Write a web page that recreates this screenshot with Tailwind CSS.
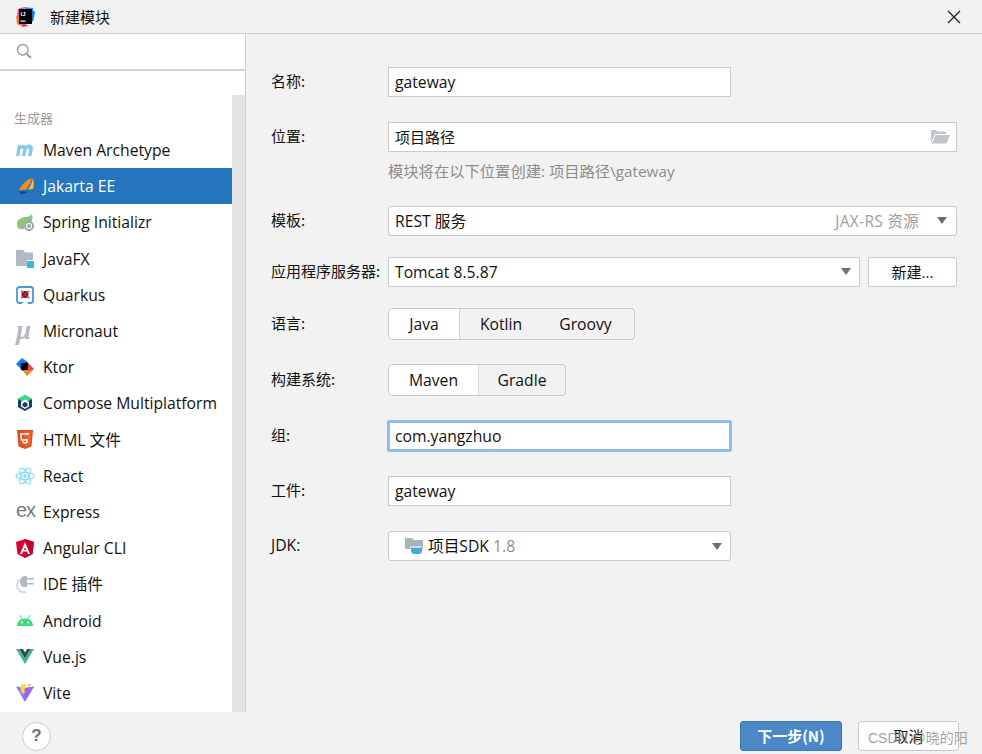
<!DOCTYPE html>
<html lang="zh"><head><meta charset="utf-8">
<script src="https://cdn.jsdelivr.net/npm/@tailwindcss/browser@4"></script>
</head>
<body class="m-0 bg-[#f2f2f2]">
<div class="relative w-[982px] h-[754px] overflow-hidden flex flex-col bg-[#f2f2f2] text-[15.7px] leading-[20px] text-[#111] font-['Open_Sans','Noto_Sans_CJK_SC',sans-serif]">
  <header class="h-[34px] shrink-0 flex items-center border-b border-[#d1d1d1] pl-[15px] pr-[21px]">
    <svg width="20" height="22" viewBox="0 0 20 22"><path d="M3 3 9 1 7 12 2 11Z" fill="#f9487f"/><path d="M9 1 18 2 19 10 12 8Z" fill="#1f8ff0"/><path d="M1 10 6 12 6 20 2 18Z" fill="#fc801d"/><path d="M6 16 14 20 7 21Z" fill="#e3396f"/><path d="M16 4 20 6 18 16 14 12Z" fill="#087cfa"/><rect x="4" y="3" width="13" height="15" fill="#000"/><text x="5.500" y="10" font-size="6" font-weight="700" fill="#fff" font-family="Liberation Sans">IJ</text><rect x="5.500" y="14.500" width="5" height="1.200" fill="#fff"/></svg>
    <span class="ml-[15px] text-[15px] text-[#111] font-['Noto_Sans_CJK_SC',sans-serif]">新建模块</span>
    <svg class="ml-auto" width="14" height="14" viewBox="0 0 14 14"><path d="M1 1 13 13M13 1 1 13" stroke="#222" stroke-width="1.300" fill="none"/></svg>
  </header>
  <div class="flex flex-1 min-h-0">
    <aside class="w-[246px] shrink-0 h-[678px] bg-white border-r border-[#d1d1d1] flex flex-col">
      <div class="h-[37px] shrink-0 border-b-[2px] border-[#d4d4d4] flex items-center pl-[16px] pb-[2px]">
        <svg width="16" height="16" viewBox="0 0 16 16"><circle cx="6.800" cy="6.800" r="5.300" fill="none" stroke="#8f9599" stroke-width="1.300"/><path d="m10.800 10.800 4.200 4.200" stroke="#8f9599" stroke-width="1.800"/></svg>
      </div>
      <div class="flex flex-1 min-h-0 relative">
        <div class="flex-1 min-w-0 pt-[35px]">
          <div class="h-[23px] pl-[14px] text-[13px] text-[#9a9a9a] flex items-center font-['Noto_Sans_CJK_SC',sans-serif]">生成器</div>
          <ul class="mt-[3px]">
            <li class="h-[36.2px] flex items-center pl-[15px] gap-[9px]"><svg width="19" height="14" viewBox="0 0 19 14"><path d="M1 13 3 2h3l-.3 1.500C7 2 9 1.500 10.500 3c1.400-1.500 3.500-2 5.500-1 2 1 2 3 1.700 4.500L16.500 13h-3.500l1.200-6c.3-1.500-1.800-2-2.700-.5L10.300 13H7l1.200-6c.3-1.500-1.800-2-2.700-.5L4.300 13Z" fill="#7fcbed"/></svg><span>Maven Archetype</span></li>
            <li class="h-[36.2px] flex items-center pl-[17px] gap-[9px] bg-[#2675bf] text-white"><svg width="17" height="18" viewBox="0 0 17 18"><path d="M15 1C9 3 4 8 2 13.500l7-1C12 9 14 5 15 1Z" fill="#f98b1e"/><path d="M16 1C15 6 13 10 11 12.500l5-.5C17 9 17 5 16 1Z" fill="#fbc02d"/><path d="M1 14.500h11L5 17.500Z" fill="#1c3f94"/></svg><span>Jakarta EE</span></li>
            <li class="h-[36.2px] flex items-center pl-[16px] gap-[9px]"><svg width="18" height="18" viewBox="0 0 18 18"><path d="M1 11C1 6 6 4 10 4c2 0 5-1 6-3 1 4 0 7-1 8-2-1-6 0-7 4 0 1 0 2 .5 3H5C2 16 1 14 1 11Z" fill="#8ec57b"/><circle cx="13" cy="13" r="5" fill="#9aa3aa"/><circle cx="13" cy="13" r="2.500" fill="none" stroke="#fff" stroke-width="1.200"/></svg><span>Spring Initializr</span></li>
            <li class="h-[36.2px] flex items-center pl-[16px] gap-[9px]"><svg width="18" height="18" viewBox="0 0 18 18"><path d="M0 0h7l2 2.500h8V10h-6v6H0Z" fill="#b1bac1"/><rect x="11" y="11" width="7" height="7" fill="#40b6e0"/></svg><span>JavaFX</span></li>
            <li class="h-[36.2px] flex items-center pl-[16px] gap-[9px]"><svg width="18" height="18" viewBox="0 0 18 18"><rect x="1" y="1" width="16" height="16" rx="2.500" fill="#fff" stroke="#4695eb" stroke-width="1.800"/><path d="m5.500 18 3.500-4 3.500 4Z" fill="#fff"/><circle cx="9" cy="8.500" r="3.500" fill="#333"/><path d="M5 5 13 12M13 5 5 12" stroke="#ff004a" stroke-width="1.200"/></svg><span>Quarkus</span></li>
            <li class="h-[36.2px] flex items-center pl-[16px] gap-[9px]"><span class="w-[18px] h-[20px] overflow-visible text-[27px] leading-[20px] font-bold italic text-[#b1bac1] font-['Liberation_Serif',serif] -mt-[2px]">μ</span><span>Micronaut</span></li>
            <li class="h-[36.2px] flex items-center pl-[16px] gap-[9px]"><svg width="18" height="18" viewBox="0 0 18 18"><path d="M6 0 0 6l4 4L11 3.500Z" fill="#087cfa"/><path d="M11 3.500 4 10l3 3 4-2Z" fill="#000"/><path d="M13 7 7 13l4 5 6.500-6.500Z" fill="#fc801d"/><path d="M11 3.500 18 11l-5 2-2-6Z" fill="#e44857"/><rect x="5" y="5" width="7" height="7" fill="#000"/></svg><span>Ktor</span></li>
            <li class="h-[36.2px] flex items-center pl-[17px] gap-[10px]"><svg width="16" height="18" viewBox="0 0 16 18"><path d="M8 1 15 5v8l-7 4-7-4V5Z" fill="#1e3a5f"/><path d="M8 1 15 5 11 7.500H5L1 5Z" fill="#3ddc84"/><path d="M8 5.500 12 8v4.500L8 15l-4-2.500V8Z" fill="#fff"/><path d="M8 8 10.500 9.500v2.500L8 13.500 5.500 12V9.500Z" fill="#1e3a5f"/></svg><span>Compose Multiplatform</span></li>
            <li class="h-[36.2px] flex items-center pl-[17px] gap-[10px]"><svg width="16" height="19" viewBox="0 0 16 19"><path d="M0 0h16l-1.500 16.500L8 19l-6.500-2.500Z" fill="#e44d26"/><path d="M8 1.500h6.300L13 15.500l-5 1.800Z" fill="#f16529"/><path d="M12 4H4l.5 6H10l-.2 2.500L8 13l-1.800-.5-.1-1.300" fill="none" stroke="#fff" stroke-width="1.600"/></svg><span>HTML 文件</span></li>
            <li class="h-[36.2px] flex items-center pl-[15px] gap-[8px]"><svg width="20" height="18" viewBox="0 0 20 18"><g fill="none" stroke="#7fdcf9" stroke-width="1.100"><ellipse cx="10" cy="9" rx="9" ry="3.500"/><ellipse cx="10" cy="9" rx="9" ry="3.500" transform="rotate(60 10 9)"/><ellipse cx="10" cy="9" rx="9" ry="3.500" transform="rotate(120 10 9)"/></g><circle cx="10" cy="9" r="1.800" fill="#7fdcf9"/></svg><span>React</span></li>
            <li class="h-[36.2px] flex items-center pl-[16px] gap-[9px]"><span class="w-[18px] text-[20px] leading-[20px] tracking-[-1px] text-[#7a7a7a] -mt-[3px] font-['Liberation_Sans',sans-serif]">ex</span><span>Express</span></li>
            <li class="h-[36.2px] flex items-center pl-[16px] gap-[9px]"><svg width="18" height="19" viewBox="0 0 18 19"><path d="M9 0 18 3l-1.500 12L9 19l-7.500-4L0 3Z" fill="#dd0031"/><path d="M9 0 18 3l-1.500 12L9 19Z" fill="#c3002f"/><path d="M9 3 4 15h2l1-2.500h4l1 2.500h2ZM8 11l1-3 1 3Z" fill="#fff"/></svg><span>Angular CLI</span></li>
            <li class="h-[36.2px] flex items-center pl-[16px] gap-[9px]"><svg width="18" height="18" viewBox="0 0 18 18"><path d="M8 1h3v11H8C5 12 4 9 4 7s2-6 4-6Z" fill="#b1bac1"/><path d="M11 3h7v1.500h-7ZM11 8h7v1.500h-7Z" fill="#b1bac1"/><path d="M5 4C1 6 0 11 2 14s6 4 8 3" fill="none" stroke="#cdd3d7" stroke-width="1.600"/></svg><span>IDE 插件</span></li>
            <li class="h-[36.2px] flex items-center pl-[17px] gap-[10px]"><svg width="16" height="11" viewBox="0 0 16 11"><path d="M0 11C0 7 3 3.500 8 3.500S16 7 16 11Z" fill="#3ddc84"/><path d="M3 0l2 4M13 0l-2 4" stroke="#3ddc84" stroke-width="1"/><circle cx="5" cy="7.500" r="1" fill="#fff"/><circle cx="11" cy="7.500" r="1" fill="#fff"/></svg><span>Android</span></li>
            <li class="h-[36.2px] flex items-center pl-[16px] gap-[9px]"><svg width="18" height="15" viewBox="0 0 18 15"><path d="M0 0h3.500L9 9.500 14.500 0H18L9 15Z" fill="#41b883"/><path d="M3.500 0H7L9 3.500 11 0h3.500L9 9.500Z" fill="#35495e"/></svg><span>Vue.js</span></li>
            <li class="h-[36.2px] flex items-center pl-[16px] gap-[9px]"><svg width="18" height="18" viewBox="0 0 18 18"><path d="M0 2.500 9 4l9-1.500L9 18Z" fill="#7a7bf7"/><path d="M4 3.500 9 4l9-1.500L10 15Z" fill="#a85bf5" opacity=".7"/><path d="M10 0 5 1l-.5 8 2.500-.5-.5 3L10 7l-2 .5Z" fill="#ffd62e"/><path d="M12 0l3-.2-.8 2.500-2.700.3Z" fill="#ffc517"/></svg><span>Vite</span></li>
          </ul>
        </div>
        <div class="w-[13px] shrink-0 mt-[24px] bg-[#e3e3e3]"></div>
      </div>
    </aside>
    <main class="flex-1 min-w-0 pl-[25px] pr-[25px] pt-[33px] relative">
      <div class="flex items-center h-[30px]">
        <label class="w-[117px] shrink-0 pb-[2px] font-['Noto_Sans_CJK_SC',sans-serif] text-[15px]">名称:</label>
        <div class="w-[343px] h-[30px] bg-white border border-[#c9c9c9] pl-[6px] pb-[1px] flex items-center">gateway</div>
      </div>
      <div class="flex items-center h-[30px] mt-[25px]">
        <label class="w-[117px] shrink-0 pb-[2px] font-['Noto_Sans_CJK_SC',sans-serif] text-[15px]">位置:</label>
        <div class="flex-1 h-[30px] bg-white border border-[#c9c9c9] pl-[6px] pr-[6px] pb-[1px] flex items-center justify-between"><span class="text-[15px]">项目路径</span>
          <svg width="19" height="15" viewBox="0 0 19 15"><path d="M0 1h5l1.500 1.500H15V5H4L0 14Z" fill="#bfc6ca"/><path d="M4.500 6H19l-3.500 8.500H1Z" fill="#bfc6ca"/></svg></div>
      </div>
      <div class="ml-[117px] mt-[9px] h-[20px] flex items-center text-[#8c8c8c] text-[15.3px]">模块将在以下位置创建: 项目路径\gateway</div>
      <div class="flex items-center h-[30px] mt-[25px]">
        <label class="w-[117px] shrink-0 pb-[2px] font-['Noto_Sans_CJK_SC',sans-serif] text-[15px]">模板:</label>
        <div class="flex-1 h-[30px] bg-white border border-[#c9c9c9] rounded-[3px] pl-[6px] pr-[9px] pb-[1px] flex items-center"><span>REST 服务</span><span class="ml-auto text-[#9e9e9e] text-[15.5px] tracking-[0.3px]">JAX-RS 资源</span>
          <span class="ml-[18px] w-0 h-0 border-x-[5.500px] border-x-transparent border-t-[7px] border-t-[#6e6e6e]"></span></div>
      </div>
      <div class="flex items-center h-[30px] mt-[21px]">
        <label class="w-[117px] shrink-0 pb-[2px] font-['Noto_Sans_CJK_SC',sans-serif] text-[15px]">应用程序服务器:</label>
        <div class="w-[472px] h-[30px] bg-white border border-[#c9c9c9] rounded-[3px] pl-[6px] pr-[8px] pb-[1px] flex items-center justify-between"><span>Tomcat 8.5.87</span>
          <span class="w-0 h-0 border-x-[5.500px] border-x-transparent border-t-[7px] border-t-[#6e6e6e]"></span></div>
        <button class="ml-[8px] flex-1 h-[30px] bg-white border border-[#c9c9c9] rounded-[3px] text-[15px] text-[#111]">新建...</button>
      </div>
      <div class="flex items-center h-[32px] mt-[21px]">
        <label class="w-[117px] shrink-0 pb-[2px] font-['Noto_Sans_CJK_SC',sans-serif] text-[15px]">语言:</label>
        <div class="h-[32px] flex items-center border-[1.500px] border-[#c9c9c9] rounded-[4px] bg-[#f2f2f2]">
          <span class="w-[71px] h-full flex items-center justify-center bg-white border-r border-[#d4d4d4] rounded-l-[3px]">Java</span>
          <span class="w-[82px] h-full flex items-center justify-center">Kotlin</span>
          <span class="w-[92px] pr-[5px] h-full flex items-center justify-center">Groovy</span>
        </div>
      </div>
      <div class="flex items-center h-[32px] mt-[24px]">
        <label class="w-[117px] shrink-0 pb-[2px] font-['Noto_Sans_CJK_SC',sans-serif] text-[15px]">构建系统:</label>
        <div class="h-[32px] flex items-center border-[1.500px] border-[#c9c9c9] rounded-[4px] bg-[#f2f2f2]">
          <span class="w-[90px] h-full flex items-center justify-center bg-white border-r border-[#d4d4d4] rounded-l-[3px]">Maven</span>
          <span class="w-[86px] h-full flex items-center justify-center">Gradle</span>
        </div>
      </div>
      <div class="flex items-center h-[32px] mt-[24px]">
        <label class="w-[117px] shrink-0 pb-[2px] font-['Noto_Sans_CJK_SC',sans-serif] text-[15px]">组:</label>
        <div class="w-[345px] -ml-[1px] h-[32px] bg-white border-[3px] border-[#8fbdec] rounded-[2px] pl-[5px] pb-[1px] flex items-center">com.yangzhuo</div>
      </div>
      <div class="flex items-center h-[30px] mt-[24px]">
        <label class="w-[117px] shrink-0 pb-[2px] font-['Noto_Sans_CJK_SC',sans-serif] text-[15px]">工件:</label>
        <div class="w-[343px] h-[30px] bg-white border border-[#c9c9c9] pl-[6px] pb-[1px] flex items-center">gateway</div>
      </div>
      <div class="flex items-center h-[30px] mt-[25px]">
        <label class="w-[117px] shrink-0 pb-[2px] font-['Open_Sans',sans-serif]">JDK:</label>
        <div class="w-[343px] h-[30px] bg-white border border-[#c9c9c9] rounded-[3px] pl-[16px] pr-[8px] flex items-center">
          <svg width="18" height="18" viewBox="0 0 18 18"><path d="M0 1h7l2 2h9v9H0Z" fill="#a8b3ba"/><path d="M6 11h11v3c0 2-2 3-3 3H9c-1 0-3-1-3-3Z" fill="#40a9e0"/><path d="M5 10h12" stroke="#fff" stroke-width="1"/></svg>
          <span class="ml-[5px]">项目SDK <span class="text-[#8c8c8c]">1.8</span></span>
          <span class="ml-auto w-0 h-0 border-x-[5.500px] border-x-transparent border-t-[7px] border-t-[#6e6e6e]"></span></div>
      </div>
    </main>
  </div>
  <footer class="absolute left-0 right-0 bottom-[3px] h-[30px] flex items-center pl-[22px] pr-[23px]">
    <div class="w-[29px] h-[29px] rounded-full bg-white border border-[#c9c9c9] flex items-center justify-center text-[17px] font-bold text-[#6e6e6e] font-['Liberation_Sans',sans-serif]">?</div>
    <button class="ml-auto w-[102px] h-[30px] rounded-[3px] bg-[#4a88c7] border border-[#3d78b5] text-white font-semibold text-[15px] font-['Noto_Sans_CJK_SC',sans-serif]">下一步(N)</button>
    <button class="ml-[16px] w-[101px] h-[30px] rounded-[3px] bg-white border border-[#c9c9c9] text-[#111] font-['Noto_Sans_CJK_SC',sans-serif] text-[15px]">取消</button>
  </footer>
  <div class="absolute left-[868px] top-[728px] text-[14px] leading-[20px] text-[#8f8f8f]/85 whitespace-nowrap font-['Liberation_Sans','Noto_Sans_CJK_SC',sans-serif]">CSDN @晓的阳</div>
</div>
</body></html>
